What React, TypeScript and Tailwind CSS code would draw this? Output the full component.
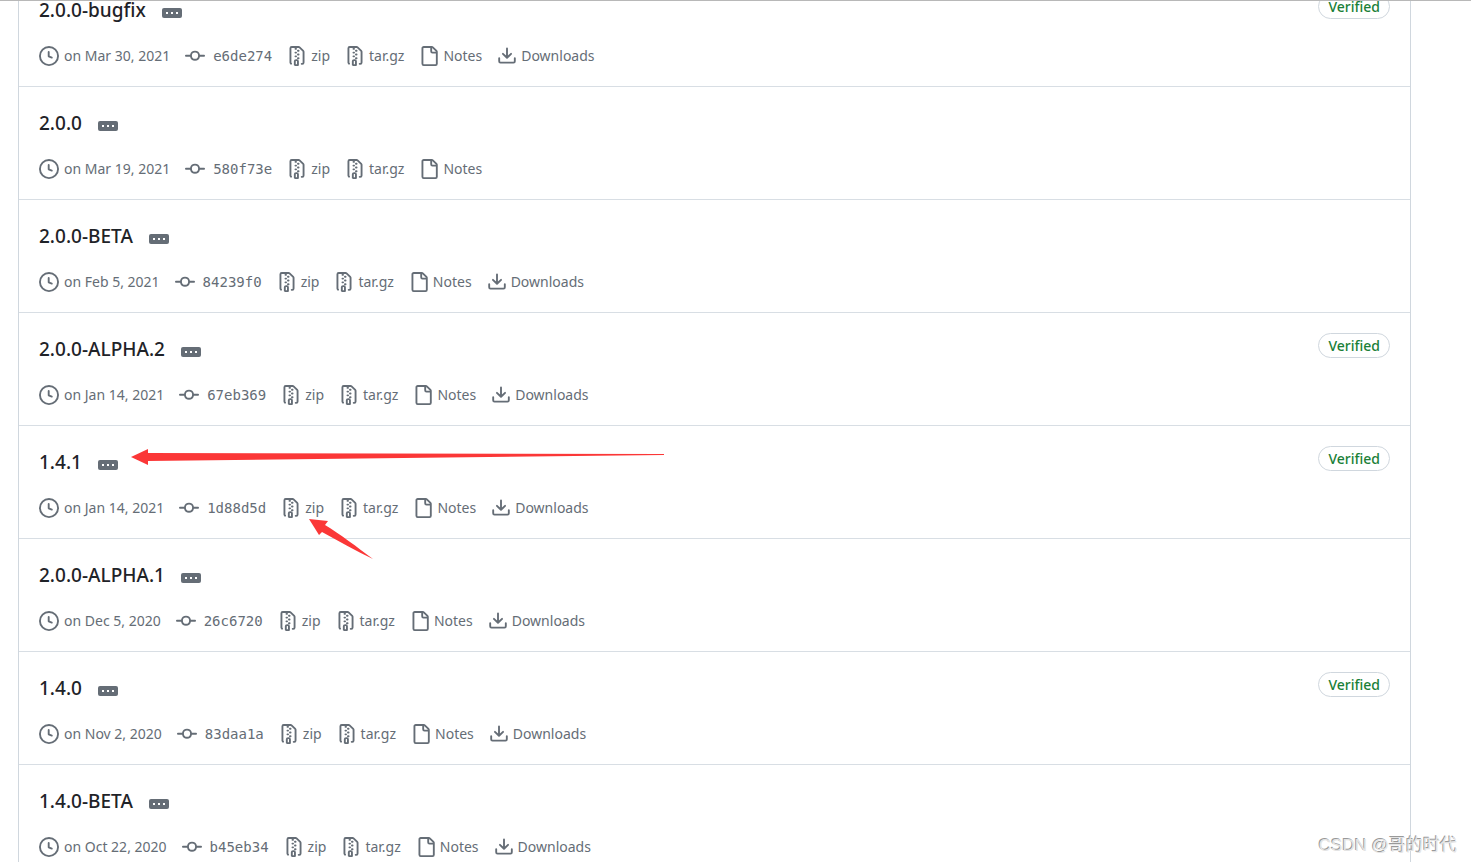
import type { ReactNode } from "react";

interface Tag {
    name: string;
    date: string;
    commit: string;
    verified?: boolean;
    downloads?: boolean;
}

const tags: Tag[] = [
    { name: "2.0.0-bugfix", date: "Mar 30, 2021", commit: "e6de274", verified: true, downloads: true },
    { name: "2.0.0", date: "Mar 19, 2021", commit: "580f73e" },
    { name: "2.0.0-BETA", date: "Feb 5, 2021", commit: "84239f0", downloads: true },
    { name: "2.0.0-ALPHA.2", date: "Jan 14, 2021", commit: "67eb369", verified: true, downloads: true },
    { name: "1.4.1", date: "Jan 14, 2021", commit: "1d88d5d", verified: true, downloads: true },
    { name: "2.0.0-ALPHA.1", date: "Dec 5, 2020", commit: "26c6720", downloads: true },
    { name: "1.4.0", date: "Nov 2, 2020", commit: "83daa1a", verified: true, downloads: true },
    { name: "1.4.0-BETA", date: "Oct 22, 2020", commit: "b45eb34", downloads: true },
];

const icons = {
    clock: "M1.5 8a6.5 6.5 0 1113 0 6.5 6.5 0 01-13 0zM8 0a8 8 0 100 16A8 8 0 008 0zm.5 4.75a.75.75 0 00-1.5 0v3.5a.75.75 0 00.471.696l2.5 1a.75.75 0 00.557-1.392L8.5 7.742V4.75z",
    commit: "M10.5 7.75a2.5 2.5 0 11-5 0 2.5 2.5 0 015 0zm1.43.75a4.002 4.002 0 01-7.86 0H.75a.75.75 0 110-1.5h3.32a4.001 4.001 0 017.86 0h3.32a.75.75 0 110 1.5h-3.32z",
    zip: "M3.5 1.75a.25.25 0 01.25-.25h3a.75.75 0 000 1.5h.5a.75.75 0 000-1.5h2.086a.25.25 0 01.177.073l2.914 2.914a.25.25 0 01.073.177v8.586a.25.25 0 01-.25.25h-.5a.75.75 0 000 1.5h.5A1.75 1.75 0 0014 13.25V4.664c0-.464-.184-.909-.513-1.237L10.573.513A1.75 1.75 0 009.336 0H3.75A1.75 1.75 0 002 1.75v11.5c0 .649.353 1.214.874 1.515a.75.75 0 10.752-1.298.25.25 0 01-.126-.217V1.75zM8.75 3a.75.75 0 000 1.5h.5a.75.75 0 000-1.5h-.5zM6 5.25a.75.75 0 01.75-.75h.5a.75.75 0 010 1.5h-.5A.75.75 0 016 5.25zm2 1.5A.75.75 0 018.75 6h.5a.75.75 0 010 1.5h-.5A.75.75 0 018 6.75zm-1.25.75a.75.75 0 000 1.5h.5a.75.75 0 000-1.5h-.5zM8 9.75A.75.75 0 018.75 9h.5a.75.75 0 010 1.5h-.5A.75.75 0 018 9.75zm-.75.75a1.75 1.75 0 00-1.75 1.75v3c0 .414.336.75.75.75h2.5a.75.75 0 00.75-.75v-3a1.75 1.75 0 00-1.75-1.75h-.5zM7 12.25a.25.25 0 01.25-.25h.5a.25.25 0 01.25.25v2.25H7v-2.25z",
    file: "M2 1.75C2 .784 2.784 0 3.75 0h6.586c.464 0 .909.184 1.237.513l2.914 2.914c.329.328.513.773.513 1.237v9.586A1.75 1.75 0 0113.25 16h-9.5A1.75 1.75 0 012 14.25zm1.75-.25a.25.25 0 00-.25.25v12.5c0 .138.112.25.25.25h9.5a.25.25 0 00.25-.25V6h-2.75A1.75 1.75 0 019 4.25V1.5zm6.75.062V4.25c0 .138.112.25.25.25h2.688l-.011-.013-2.914-2.914-.013-.011z",
    download: "M2.75 14A1.75 1.75 0 011 12.25v-2.5a.75.75 0 011.5 0v2.5c0 .138.112.25.25.25h10.5a.25.25 0 00.25-.25v-2.5a.75.75 0 011.5 0v2.5A1.75 1.75 0 0113.25 14zM7.25 7.689V2a.75.75 0 011.5 0v5.689l1.97-1.969a.749.749 0 111.06 1.06l-3.25 3.25a.749.749 0 01-1.06 0L4.22 6.78a.749.749 0 111.06-1.06z",
};

function Icon({ name }: { name: keyof typeof icons }) {
    return (
        <svg viewBox="0 0 16 16" className="h-5 w-5 shrink-0 fill-current" aria-hidden="true">
            <path fillRule="evenodd" d={icons[name]} />
        </svg>
    );
}

function MetaLink({ icon, children }: { icon: keyof typeof icons; children: ReactNode }) {
    return (
        <a href="#" className="flex items-center gap-1">
            <Icon name={icon} />
            {children}
        </a>
    );
}

function TagRow({ tag }: { tag: Tag }) {
    return (
        <li className="border-b border-[#d8dee4] px-5 py-5">
            <div className="flex items-start justify-between">
                <div className="flex items-center gap-4">
                    <h2 className="text-[19px] leading-8 font-medium text-[#1f2328]">
                        <a href="#">{tag.name}</a>
                    </h2>
                    <button
                        type="button"
                        aria-label="Toggle commit message"
                        className="mt-[6px] flex h-[10px] w-5 items-center justify-center gap-[3px] rounded-[2px] bg-[#656d76]"
                    >
                        <span className="h-[2px] w-[2px] bg-white" />
                        <span className="h-[2px] w-[2px] bg-white" />
                        <span className="h-[2px] w-[2px] bg-white" />
                    </button>
                </div>
                {tag.verified && (
                    <button
                        type="button"
                        className="h-[25px] rounded-full border border-[#d0d7de] px-[9px] text-sm leading-[23px] font-medium text-[#1a7f37]"
                    >
                        Verified
                    </button>
                )}
            </div>
            <div className="mt-5 flex h-5 items-center gap-[15px] text-sm leading-5 text-[#656d76]">
                <span className="flex items-center gap-[5px]">
                    <Icon name="clock" />
                    on {tag.date}
                </span>
                <a href="#" className="flex items-center gap-2 font-['DejaVu_Sans_Mono',monospace]">
                    <Icon name="commit" />
                    {tag.commit}
                </a>
                <MetaLink icon="zip">zip</MetaLink>
                <MetaLink icon="zip">tar.gz</MetaLink>
                <MetaLink icon="file">Notes</MetaLink>
                {tag.downloads && <MetaLink icon="download">Downloads</MetaLink>}
            </div>
        </li>
    );
}

export default function App() {
    return (
        <div className="relative h-screen overflow-hidden border-t border-[#b8b8b8] bg-white font-['Noto_Sans',sans-serif]">
            <ul className="-mt-[27px] mr-[60px] ml-[18px] border-x border-[#d0d7de]">
                {tags.map((tag) => (
                    <TagRow key={tag.name} tag={tag} />
                ))}
            </ul>

            <svg viewBox="0 0 534 17" className="absolute top-[448px] left-[131px] w-[534px] fill-[#fb3737]" aria-hidden="true">
                <path d="M0 8 17 0V4L533 5V6L17 12V16z" />
            </svg>
            <svg viewBox="0 0 65 41" className="absolute top-[518px] left-[309px] w-[65px] fill-[#fb3737]" aria-hidden="true">
                <path d="M0 0 19 2 16 6C31 15 48 28 64 40 47 32 30 22 13 13L10 16z" />
            </svg>

            <p className="absolute right-[14px] bottom-1 font-['Liberation_Sans','Noto_Sans_CJK_SC',sans-serif] text-[17px] leading-6 text-[#e4e4e4] [text-shadow:-1px_-1px_0_#999]">
                CSDN @哥的时代
            </p>
        </div>
    );
}
